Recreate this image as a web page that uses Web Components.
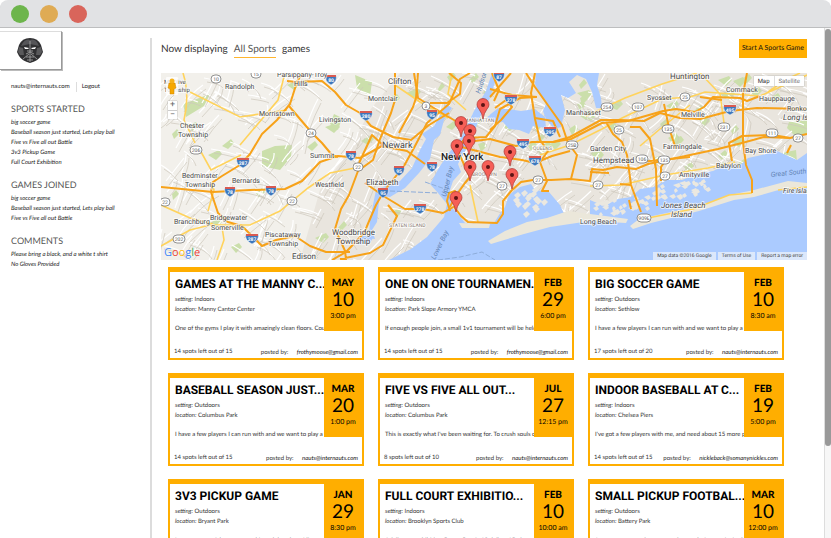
<!DOCTYPE html>
<html lang="en">
<head>
<meta charset="utf-8">
<title>Sports games</title>
<style>
html, body { margin: 0; height: 100%; overflow: hidden; background: #fff; }
body { font-family: Lato, Roboto, sans-serif; color: #333; font-size: 6px; text-rendering: geometricPrecision; }
</style>
</head>
<body>
<browser-frame>
  <side-bar slot="side">
    <side-list heading="Sports started">
      <li>big soccer game</li><li>Baseball season just started, Lets play ball</li><li>Five vs Five all out Battle</li><li>3v3 Pickup Game</li><li>Full Court Exhibition</li>
    </side-list>
    <side-list heading="Games joined">
      <li>big soccer game</li><li>Baseball season just started, Lets play ball</li><li>Five vs Five all out Battle</li>
    </side-list>
    <side-list heading="Comments">
      <li>Please bring a black, and a white t shirt</li><li>No Gloves Provided</li>
    </side-list>
  </side-bar>
  <main-bar></main-bar>
  <area-map></area-map>
  <game-list>
    <game-card month="May" day="10" time="3:00 pm" setting="Indoors" place="Manny Cantor Center" spots="14 spots left out of 15" by="frothymoose@gmail.com"><span slot="title">Games at the Manny C...</span>One of the gyms I play it with amazingly clean floors. Cour</game-card>
    <game-card month="Feb" day="29" time="6:00 pm" setting="Indoors" place="Park Slope Armory YMCA" spots="14 spots left out of 15" by="frothymoose@gmail.com"><span slot="title">One on one tournamen...</span>If enough people join, a small 1v1 tournament will be held</game-card>
    <game-card month="Feb" day="10" time="8:30 am" setting="Outdoors" place="Sethlow" spots="17 spots left out of 20" by="nauts@internauts.com"><span slot="title">Big soccer game</span>I have a few players I can run with and we want to play a f</game-card>
    <game-card month="Mar" day="20" time="1:00 pm" setting="Outdoors" place="Columbus Park" spots="14 spots left out of 15" by="nauts@internauts.com"><span slot="title">Baseball season just...</span>I have a few players I can run with and we want to play a f</game-card>
    <game-card month="Jul" day="27" time="12:15 pm" setting="Outdoors" place="Columbus Park" spots="8 spots left out of 10" by="nauts@internauts.com"><span slot="title">Five vs Five all out...</span>This is exactly what I've been waiting for. To crush souls o</game-card>
    <game-card month="Feb" day="19" time="5:00 pm" setting="Indoors" place="Chelsea Piers" spots="14 spots left out of 15" by="nickleback@somanynickles.com"><span slot="title">Indoor baseball at c...</span>I've got a few players with me, and need about 15 more pe</game-card>
    <game-card month="Jan" day="29" time="8:30 pm" setting="Outdoors" place="Bryant Park" spots="" by=""><span slot="title">3v3 Pickup Game</span>I wanna run a pickup game at this park by where I live.</game-card>
    <game-card month="Feb" day="10" time="10:00 am" setting="Indoors" place="Brooklyn Sports Club" spots="" by=""><span slot="title">Full court exhibitio...</span>A full court exhibition Game. Cost is 10 dollars 15 players</game-card>
    <game-card month="Mar" day="10" time="12:00 pm" setting="Outdoors" place="Battery Park" spots="" by=""><span slot="title">Small pickup footbal...</span>Just want to run a few games after work. Anyone invited</game-card>
  </game-list>
</browser-frame>
<script>
function define(name, html, after) {
  const tpl = document.createElement('template');
  tpl.innerHTML = html;
  customElements.define(name, class extends HTMLElement {
    constructor() {
      super();
      this.attachShadow({ mode: 'open' }).append(tpl.content.cloneNode(true));
    }
    connectedCallback() { if (after) after(this, this.shadowRoot); }
  });
}

define('browser-frame', `
<style>
:host { display: flex; flex-direction: column; height: 100vh; overflow: hidden; }
header { flex: none; height: 27px; box-sizing: border-box; display: flex; align-items: center; gap: 11px; padding-left: 11px; background: #e1e2e4; border-radius: 8px 8px 0 0; box-shadow: 0 1px #bdbebf; }
i { width: 18px; height: 18px; border-radius: 50%; background: #6db54c; }
i:nth-child(2) { background: #dfab54; }
i:nth-child(3) { background: #d9655b; }
.body { flex: 1; min-height: 0; display: flex; margin-top: 1px; }
.side { flex: none; width: 150px; padding-top: 3px; }
.rule { flex: none; width: 2px; background: #dcdcdc; margin-top: 10px; }
main { flex: 1; min-width: 0; padding: 0 17px 0 9px; overflow: hidden; }
.track { flex: none; width: 6px; border-left: 1px solid #ddd; background: #f7f7f7; padding-top: 1px; }
.thumb { height: 82%; background: #999; border-radius: 3px; }
</style>
<header><i></i><i></i><i></i></header>
<div class="body"><div class="side"><slot name="side"></slot></div><div class="rule"></div><main><slot></slot></main><div class="track"><div class="thumb"></div></div></div>`);

define('side-bar', `
<style>
:host { display: block; color: #222; }
.logo { display: flex; width: 61px; height: 37px; border: 1px solid #ddd; border-left: 0; border-right-color: #999; border-bottom-color: #999; box-shadow: 1px 1px #bbb; }
.logo svg { margin: 5px 0 0 16px; }
nav { display: flex; align-items: center; margin: 11px 0 0 11px; height: 11px; line-height: 10px; }
a { color: inherit; text-decoration: none; }
a + a { border-left: 1px solid #ddd; margin-left: 6px; padding-left: 5px; }
</style>
<div class="logo"><svg width="28" height="28" viewBox="0 0 28 28" role="img" aria-label="Internauts">
<path d="M14 1Q22 1 25 8L27 15 25 19Q22 24 14 26Q6 24 3 19L1 15 3 8Q6 1 14 1Z" fill="#303032"/>
<path d="M5 9Q9 1 14 3Q20 1 23 9L19 8 14 7 9 8Z" fill="#555558"/>
<path d="M3 10 7 11 8 18 4 18 2 15Z M25 10 21 11 20 18 24 18 26 15Z" fill="#59595b"/>
<path d="M8 10 13 11 12 12 9 12ZM20 10 15 11 16 12 19 12Z" fill="#fff"/>
<path d="M14 4V25M11 14H17M10 17 14 15 18 17M7 22 13 17M21 22 15 17M10 20H18M11 23H17" stroke="#aaa" stroke-width=".8" fill="none"/>
</svg></div>
<nav><a href="#account">nauts@internauts.com</a><a href="#logout">Logout</a></nav>
<slot></slot>`);

define('side-list', `
<style>
:host { display: block; margin: 10px 0 0 11px; }
h2 { margin: 0 0 2px; font-weight: 400; font-size: 9px; line-height: 14px; text-transform: uppercase; color: #555; }
ul { margin: 0; padding: 0; list-style: none; font-style: italic; line-height: 10px; white-space: nowrap; }
::slotted(li) { list-style: none; height: 10px; }
</style><h2></h2><ul><slot></slot></ul>`, (el, r) => { r.querySelector('h2').textContent = el.getAttribute('heading'); });

define('main-bar', `
<style>
:host { display: flex; align-items: center; justify-content: space-between; height: 45px; }
h1 { margin: 0; font-size: 10px; line-height: 14px; font-weight: 400; display: flex; gap: 6px; align-items: flex-start; height: 18px; }
h1 a { color: #555; text-decoration: none; border-bottom: 1px solid #ffb52e; padding-bottom: 1px; }
button { height: 19px; width: 68px; margin-bottom: 5px; border: 0; padding: 0; background: #ffae00; font: 7px Lato, sans-serif; color: #111; text-rendering: inherit; }
</style>
<h1>Now displaying <a href="#sports">All Sports</a> games</h1><button>Start A Sports Game</button>`);

define('game-list', `
<style>:host { display: grid; grid-template-columns: repeat(3, minmax(0, 1fr)); gap: 13px 14px; padding: 7px 23px 0 7px; }</style><slot></slot>`);

define('game-card', `
<style>
:host { display: grid; grid-template-columns: minmax(0, 1fr) 38px; grid-template-rows: 59px 27px; border: 2px solid #ffae00; border-top-width: 5px; box-sizing: border-box; background: #fff; color: #333; line-height: 10px; }
.info { padding: 5px 0 0 5px; min-width: 0; white-space: nowrap; overflow: hidden; }
h3 { margin: 0 0 4px; font: 700 12px/14px Roboto, sans-serif; color: #000; text-transform: uppercase; }
p { margin: 0; }
.desc { margin-top: 9px; }
time { background: #ffae00; color: #000; text-align: center; display: flex; flex-direction: column; padding-top: 4px; }
b { font-size: 10px; line-height: 15px; font-weight: 900; text-transform: uppercase; }
.day { font-size: 19px; line-height: 18px; }
.hour { font-size: 7px; line-height: 14px; }
footer { grid-column: 1 / -1; display: flex; justify-content: space-between; align-items: flex-end; padding: 0 4px; }
footer p:first-child { padding-bottom: 1px; }
footer em { margin-left: 7px; color: #111; }
</style>
<div class="info"><h3><slot name="title"></slot></h3><p><em>setting:</em> <span class="s"></span></p><p><em>location:</em> <span class="l"></span></p><p class="desc"><slot></slot></p></div>
<time><b></b><span class="day"></span><span class="hour"></span></time>
<footer><p class="n"></p><p class="by">posted by: <em></em></p></footer>`, (el, r) => {
  const put = (sel, key) => { r.querySelector(sel).textContent = el.getAttribute(key); };
  put('.s', 'setting'); put('.l', 'place'); put('b', 'month'); put('.day', 'day'); put('.hour', 'time'); put('.n', 'spots'); put('.by em', 'by');
  if (!el.getAttribute('by')) r.querySelector('.by').remove();
});

const labels = [
[164,84,'Mt Olive',6,'s'],[164,92,'Township',6,'s'],[225,89,'Randolph',7,'s'],[277,77,'Parsippany-Troy',7,'s'],[294,86,'Hills',7,'s'],[388,84,'Clifton',8,'s'],[368,101,'Montclair',7,'s'],[259,116,'Morristown',7,'s'],[319,122,'Livingston',7,'s'],[180,128,'Chester',7,'s'],[178,137,'Township',7,'s'],[382,148,'Newark',9,'s'],[310,158,'Summit',7,'s'],[182,178,'Bedminster',7,'s'],[185,187,'Township',7,'s'],[232,183,'Bernards',7,'s'],[315,187,'Westfield',7,'s'],[366,185,'Elizabeth',8,'s'],[174,224,'Branchburg',7,'s'],[210,220,'Bridgewater',7,'s'],[211,230,'Somerville',7,'s'],[265,237,'Piscataway',7,'s'],[268,246,'Township',7,'s'],[332,235,'Woodbridge',8,'s'],[336,244,'Township',8,'s'],[292,259,'Edison',8,'s'],[389,227,'STATEN ISLAND',5,'g'],[464,122,'MANHATTAN',5,'g'],[472,176,'BROOKLYN',5,'g'],[533,150,'QUEENS',5,'g'],[441,160,'New York',10,'b'],[670,79,'Huntington',8,'s'],[647,100,'Syosset',7,'s'],[566,115,'Manhasset',7,'s'],[681,117,'Melville',7,'s'],[726,92,'Commack',7,'s'],[759,101,'Hauppauge',7,'s'],[787,111,'Ronkonkoma',7,'s'],[783,120,'Long Island',8,'i'],[590,151,'Garden City',7,'s'],[593,163,'Hempstead',8,'s'],[663,149,'Farmingdale',7,'s'],[679,177,'Amityville',7,'s'],[716,168,'Babylon',7,'s'],[745,153,'Bay Shore',7,'s'],[580,224,'Long Beach',7,'s'],[661,208,'Jones Beach',8,'i'],[671,217,'Island',8,'i'],[783,193,'Fire Island',7,'i']];
const svgLabels = labels.map(l => `<text x="${l[0]}" y="${l[1]}" font-size="${l[3]}" class="${l[4]}">${l[2]}</text>`).join('');
const ovals = [[216,79,'10'],[256,74,'15'],[426,106,'3'],[311,133,'24'],[196,150,'206'],[358,167,'22'],[292,201,'22'],[165,202,'22'],[179,239,'202'],[607,107,'254'],[638,107,'107'],[685,97,'25'],[619,130,'25'],[668,129,'135'],[724,127,'231'],[772,133,'111'],[798,138,'27'],[572,145,'25B'],[642,159,'106'],[664,160,'135'],[665,176,'27'],[598,185,'27'],[502,186,'27'],[538,180,'27'],[644,218,'909E']];
const svgOvals = ovals.map(o => `<rect x="${o[0]-3-o[2].length}" y="${o[1]-4}" width="${6+o[2].length*2}" height="8" rx="4" fill="#fff" stroke="#777" stroke-width=".8"/><text x="${o[0]}" y="${o[1]+2}" font-size="5" text-anchor="middle" class="r">${o[2]}</text>`).join('');
const shields = [[331,79,'80'],[366,115,'280'],[432,114,'95'],[243,162,'287'],[230,191,'78'],[271,190,'78'],[351,155,'78'],[252,238,'287'],[399,170,'95'],[432,166,'78'],[383,192,'95'],[420,208,'278'],[499,76,'87'],[511,99,'278'],[550,131,'295'],[523,143,'495'],[535,160,'678'],[730,109,'495']];
const svgShields = shields.map(s => { const w = 3 + s[2].length; return `<path d="M${s[0]-w} ${s[1]-4}H${s[0]+w}Q${s[0]+w+2} ${s[1]+2} ${s[0]} ${s[1]+6}Q${s[0]-w-2} ${s[1]+2} ${s[0]-w} ${s[1]-4}Z" fill="#3d78bd" stroke="#fff" stroke-width=".5"/><path d="M${s[0]-w} ${s[1]-4}H${s[0]+w}V${s[1]-2}H${s[0]-w}Z" fill="#d95b52"/><text x="${s[0]}" y="${s[1]+3}" font-size="5" font-weight="700" fill="#fff" text-anchor="middle">${s[2]}</text>`; }).join('');
const pins = [[483,105],[461,123],[470,131],[469,141],[457,146],[510,152],[470,167],[488,167],[512,175],[456,198]];
const svgPins = pins.map(p => `<path d="M${p[0]} ${p[1]+14}Q${p[0]-1} ${p[1]+8} ${p[0]-4} ${p[1]+4}A6 6 0 1 1 ${p[0]+4} ${p[1]+4}Q${p[0]+1} ${p[1]+8} ${p[0]} ${p[1]+14}Z" fill="#f65f57" stroke="#a93732" stroke-width=".7"/><circle cx="${p[0]}" cy="${p[1]}" r="2" fill="#5c1414"/>`).join('');

/* Local streets: a seeded scatter of short wandering lines over the land. */
let seed = 7;
const rnd = () => (seed = (seed * 16807) % 2147483647) / 2147483647;
let streets = '', islets = '', parks = '';
for (let i = 0; i < 520; i++) {
  const x = 161 + rnd() * 646, y = 73 + rnd() * 187, a = (rnd() < .5 ? .2 : 1.8) + rnd() * .7, n = 12 + rnd() * 22;
  const dx = Math.cos(a) * n, dy = Math.sin(a) * n;
  streets += `M${x.toFixed(0)} ${y.toFixed(0)}q${(dx*.6+rnd()*6).toFixed(0)} ${(dy*.4).toFixed(0)} ${dx.toFixed(0)} ${dy.toFixed(0)}`;
}
for (let i = 0; i < 60; i++) {
  const x = 590 + rnd() * 115, y = (x < 650 ? 202 : 192) + rnd() * 14 - (x - 590) * .1;
  islets += `M${x.toFixed(0)} ${y.toFixed(0)}l${(2+rnd()*4).toFixed(0)}-2 2 3-3 2z`;
}
for (let i = 0; i < 16; i++) {
  const x = 512 + rnd() * 34, y = 190 + rnd() * 24;
  islets += `M${x.toFixed(0)} ${y.toFixed(0)}l4-3 3 3-4 4z`;
}
for (let i = 0; i < 65; i++) {
  const x = 165 + rnd() * 630, y = 75 + rnd() * (x < 400 ? 175 : 95);
  parks += `M${x.toFixed(0)} ${y.toFixed(0)}l${(4+rnd()*8).toFixed(0)}-${(2+rnd()*5).toFixed(0)} 3 4-6 6z`;
}

define('area-map', `
<style>
:host { display: block; position: relative; overflow: hidden; font-family: Roboto, sans-serif; }
svg.map { display: block; width: 100%; height: auto; }
text.s, text.b, text.i, text.g { fill: #4a4a4a; stroke: #fff; stroke-opacity: .7; stroke-width: 2px; paint-order: stroke; stroke-linejoin: round; }
text.b { font-weight: 500; fill: #222; }
text.i { font-style: italic; }
text.g { fill: #8a7c74; }
text.r { fill: #555; }
.w { fill: #6384b5; font-style: italic; }
button { border: 0; background: #fff; padding: 0; color: #333; font: 6px Roboto, sans-serif; text-rendering: inherit; }
.type { position: absolute; top: 3px; right: 3px; display: flex; gap: 1px; height: 10px; box-shadow: 0 0 1px #888; background: #ddd; }
.type button { padding: 0 4px; }
.type button + button { color: #777; }
.man { position: absolute; left: 5px; top: 4px; width: 12px; height: 18px; background: #fffc; border-radius: 1px; }
.zoom { position: absolute; left: 7px; top: 28px; width: 9px; height: 18px; display: grid; gap: 1px; background: #ccc; box-shadow: 0 0 1px #777; }
.zoom button { font-size: 9px; line-height: 8px; color: #666; }
.legal { position: absolute; right: 0; bottom: 0; height: 8px; display: flex; gap: 2px; font-size: 5px; line-height: 8px; color: #444; }
.legal > * { background: #e8effacc; padding: 0 4px; color: inherit; text-decoration: none; }
.google { position: absolute; left: 3px; bottom: 1px; font: 500 11px/13px "Open Sans", sans-serif; text-shadow: 0 0 1px #fff; }
</style>
<svg class="map" viewBox="161 73 646 187" role="img" aria-label="Map of the New York area">
<rect x="161" y="73" width="646" height="187" fill="#e9e5de"/>
<path d="M161 73H400L370 110 350 150 320 190 300 260H161Z" fill="#f2f0eb"/>
<path d="${parks}M183 104 210 94 204 106 186 117ZM262 151 275 146 292 145 291 157 280 170 262 166ZM355 75 372 82 370 96 357 88ZM334 114 342 118 338 130 330 124ZM789 122 807 120V134L795 136 787 128ZM782 153 796 150 797 162 783 161ZM500 216 508 211 511 222 503 227Z" fill="#cbdfab"/>
<path d="${streets}" fill="none" stroke="#fff" stroke-width="1.2"/>
<path d="${streets}" fill="none" stroke="#cdc7bc" stroke-width=".7" transform="translate(3 4)"/>
<path d="M536 73H599L597 85 601 98 602 108 596 108 592 92 586 79 577 75 569 82 576 93 568 98 561 95 565 110 561 127 554 129 546 119 543 111 546 104 539 93 535 84Z
M487 117 497 109 508 109 521 111 535 109 545 117 546 128 533 126 529 134 519 130 509 129 503 122 494 123Z
M492 73H498L490 98 480 117 471 140 463 155 458 164 461 172 453 181 450 190 451 207 459 215 465 223 477 226 494 223 499 215 505 207 509 195 520 187 531 184 535 190 549 192 560 205 565 216 590 216 590 200 604 206 618 199 631 197 640 189 654 187 667 180 682 180 697 174 713 171 728 164 738 167 748 158 766 154 775 150 790 157 797 160 807 153V260H389L411 249 427 237 444 217 447 204 438 193 430 184 440 166 449 153 462 136 474 111 486 91Z
M446 104 452 108 444 120 440 135 434 140 430 159 419 173 405 188 390 197 376 195 377 189 400 181 412 168 420 150 426 139 422 134 434 126Z
M376 190 380 190 377 222 372 230 375 239 369 238 370 220ZM360 236 374 236 370 243 358 245Z" fill="#abcbff"/>
<path d="M488 241 505 231 527 222 547 218 568 211 590 214 628 219 626 223 590 221 550 227 524 234 491 244ZM459 223 490 224 489 228 462 228ZM630 226 639 219 676 211 700 206 730 195 754 190 788 181 807 183 807 187 782 189 754 197 734 200 699 211 651 223 633 229ZM486 112 490 115 485 118Z" fill="#ebe7da"/>
<path d="${islets}" fill="#ebe8e0"/>
<g fill="none" stroke="#ffd35c" stroke-width="1.6">
<path d="M183 73Q190 95 184 120L195 143M190 92 240 117 287 110M161 246 190 230 210 225 250 225 280 211 308 188 330 173 365 166M161 205 190 218 213 224M200 150 211 170 241 155M211 182 214 190 208 211M222 227 224 240 217 260M395 85 420 102 448 118M285 73 278 100 240 145M540 155 570 145 602 129 622 118 662 99 690 97 705 92 760 96 807 75M586 116 625 98 662 84 697 73M590 186 621 185 665 175 708 168 735 162M643 219 693 209 729 195 752 193M778 190 807 187M470 185 478 222M452 73 448 94 466 110M700 73 720 94 725 130M640 146 660 129 690 105M768 92 785 80 800 73"/>
</g>
<g fill="none" stroke="#f7a219" stroke-width="2" stroke-linejoin="round">
<path d="M302 73 297 82 290 104 277 120 262 134 250 154 240 165 222 176 213 182 211 192 218 213 228 222 242 226 253 237 262 246 276 240 295 236 310 246 326 252 350 252"/>
<path d="M287 81 297 82 322 81 335 92 346 105 360 113 371 126 393 137 411 140 429 125 449 113"/>
<path d="M161 187 213 192 250 190 285 189 302 181 320 162 338 156 360 158 382 146 407 151 425 164"/>
<path d="M289 106 300 119 312 133 322 143 332 155 338 157"/>
<path d="M395 73 395 100 391 113 380 139 373 160 358 171 349 195 341 209 335 229 346 253M418 73 416 98 413 107 399 133M383 145 372 135 359 163"/>
<path d="M470 73 460 79 449 104 427 123 415 146 404 166 384 191 376 205 364 233 346 252 332 260M449 73 461 83 460 94 447 103 430 103M414 73 418 98 445 115 461 124"/>
<path d="M365 183 385 197 405 209 423 209 443 213 455 206M388 205 397 216 383 245 370 253 340 259M345 250 346 260"/>
<path d="M450 211 447 201 449 193 455 191 459 199 455 208 461 216 468 222 497 223 503 214 503 201 512 190 521 182 533 180 551 180 570 179 590 181 592 169 603 170 617 167 636 169 648 164 690 155 718 149 742 143 764 137 790 138 807 134"/>
<path d="M450 207 455 197 465 183 470 177 461 158 457 147 466 138 486 137 495 126 500 109 520 98 536 97M458 146 477 151 500 157 522 160 535 163 552 156 570 151"/>
<path d="M535 73 531 93 535 119 540 140 548 151 540 162 547 181 542 191 549 191M526 73 535 87 562 125 568 143 577 155 571 179M490 89 512 95 537 97M490 97 511 73"/>
<path d="M460 143 490 139 516 146 532 142 553 142 570 137 601 120 620 120 644 121 660 113 680 118 700 119 730 111 757 108 807 109"/>
<path d="M495 108 506 100 512 107 501 120 490 130M492 73 499 90 494 101M535 118 553 121 560 137"/>
<path d="M553 142 571 139 602 123 628 121 663 111 676 109 695 112 704 107 713 97 740 98 747 101 760 96M606 122 613 134 622 142 627 155 631 185 641 212M590 172 609 173M630 127 640 127 650 139 656 169 657 206M664 104 669 128 676 149M668 157 661 167 661 181M640 162 690 157M620 184 631 185M631 209 629 200"/>
<path d="M747 73 743 94 743 142 746 165 752 180 752 193M732 161 729 143 742 136 773 135 790 138M791 145 787 153M700 97 722 100"/>
</g>
${svgOvals}${svgShields}${svgLabels}
<g class="w" font-size="7"><text transform="translate(480 94) rotate(-72)">Hudson</text><text transform="translate(446 197) rotate(-76)">Upper Bay</text><text transform="translate(435 260) rotate(-64)">Lower Bay</text><text x="771" y="177" transform="rotate(-6 771 177)">Great South Bay</text></g>
<path d="M438 260 460 257 482 252 495 260M425 182 448 190M390 191 438 193" fill="none" stroke="#8eadda" stroke-dasharray="5 2"/>
${svgPins}
</svg>
<div class="type"><button>Map</button><button>Satellite</button></div>
<svg class="man" viewBox="0 0 12 18" aria-hidden="true"><path d="M3 6H9L10 11 8 12 8 17H4L4 12 2 11Z" fill="#f6a800" stroke="#c98200" stroke-width=".5"/><circle cx="6" cy="4" r="2.5" fill="#f6b21a"/></svg>
<div class="zoom"><button aria-label="Zoom in">+</button><button aria-label="Zoom out">−</button></div>
<div class="google"><span style="color:#4285f4">G</span><span style="color:#ea4335">o</span><span style="color:#fbbc05">o</span><span style="color:#4285f4">g</span><span style="color:#34a853">l</span><span style="color:#ea4335">e</span></div>
<div class="legal"><span>Map data ©2016 Google</span><a href="#terms">Terms of Use</a><a href="#report">Report a map error</a></div>`);
</script>
</body>
</html>
